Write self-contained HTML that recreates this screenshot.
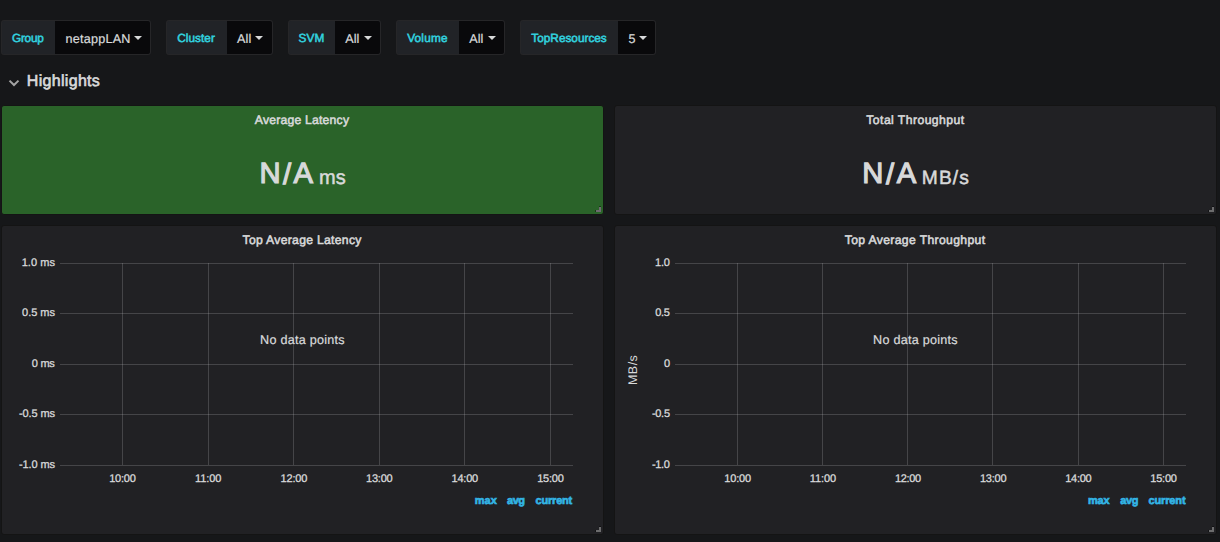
<!DOCTYPE html>
<html lang="en">
<head>
<meta charset="utf-8">
<title>Grafana - Highlights</title>
<style>
html,body{margin:0;padding:0;}
body{width:1220px;height:542px;overflow:hidden;background:#161719;font-family:"Liberation Sans",sans-serif;position:relative;text-rendering:geometricPrecision;}
.t{position:absolute;white-space:pre;}
.b{position:absolute;box-sizing:border-box;}
.lab{background:#212327;border:1px solid #262628;border-right:none;border-radius:3px 0 0 3px;}
.val{background:#09090b;border:1px solid #262628;border-left:none;border-radius:0 3px 3px 0;}
.panel{background:#212124;border:1px solid #141414;border-radius:3px;}
.hl{position:absolute;height:1px;background:rgba(200,200,200,0.22);}
.vl{position:absolute;width:1px;background:rgba(200,200,200,0.22);}
.caret{position:absolute;width:0;height:0;border-left:4px solid transparent;border-right:4px solid transparent;border-top:4px solid #d8d9da;}
.hd{position:absolute;background:#6a686e;}
</style>
</head>
<body>
<div class="b lab" style="left:1px;top:20px;width:54px;height:35px"></div>
<div class="b val" style="left:55px;top:20px;width:96px;height:35px"></div>
<div class="caret" style="left:134px;top:36px"></div>
<div class="b lab" style="left:166px;top:20px;width:61px;height:35px"></div>
<div class="b val" style="left:227px;top:20px;width:46px;height:35px"></div>
<div class="caret" style="left:255px;top:36px"></div>
<div class="b lab" style="left:288px;top:20px;width:47px;height:35px"></div>
<div class="b val" style="left:335px;top:20px;width:46px;height:35px"></div>
<div class="caret" style="left:364px;top:36px"></div>
<div class="b lab" style="left:396px;top:20px;width:63px;height:35px"></div>
<div class="b val" style="left:459px;top:20px;width:46px;height:35px"></div>
<div class="caret" style="left:488px;top:36px"></div>
<div class="b lab" style="left:520px;top:20px;width:98px;height:35px"></div>
<div class="b val" style="left:618px;top:20px;width:38px;height:35px"></div>
<div class="caret" style="left:639px;top:36px"></div>
<svg class="b" style="left:8px;top:78px" width="12" height="10" viewBox="0 0 12 10"><path d="M1.5 2.6 L6 7.0 L10.5 2.6" fill="none" stroke="#a4a4a4" stroke-width="2"/></svg>
<div class="b panel" style="left:1px;top:105px;width:603px;height:110px;background:#2a6329;"></div>
<div class="hd" style="left:599px;top:206px;width:2px;height:1px;background:rgba(0,0,0,0.4)"></div>
<div class="hd" style="left:595px;top:210px;width:1px;height:2px;background:rgba(0,0,0,0.4)"></div>
<div class="hd" style="left:599px;top:207px;width:2px;height:5px;background:#6e6a70"></div>
<div class="hd" style="left:596px;top:210px;width:5px;height:2px;background:#6e6a70"></div>
<div class="b panel" style="left:614px;top:105px;width:603px;height:110px;"></div>
<div class="hd" style="left:1212px;top:206px;width:2px;height:1px;background:rgba(0,0,0,0.4)"></div>
<div class="hd" style="left:1208px;top:210px;width:1px;height:2px;background:rgba(0,0,0,0.4)"></div>
<div class="hd" style="left:1212px;top:207px;width:2px;height:5px;background:#6c6c6d"></div>
<div class="hd" style="left:1209px;top:210px;width:5px;height:2px;background:#6c6c6d"></div>
<div class="b panel" style="left:1px;top:225px;width:603px;height:310px;"></div>
<div class="hd" style="left:599px;top:526px;width:2px;height:1px;background:rgba(0,0,0,0.4)"></div>
<div class="hd" style="left:595px;top:530px;width:1px;height:2px;background:rgba(0,0,0,0.4)"></div>
<div class="hd" style="left:599px;top:527px;width:2px;height:5px;background:#6c6c6d"></div>
<div class="hd" style="left:596px;top:530px;width:5px;height:2px;background:#6c6c6d"></div>
<div class="b panel" style="left:614px;top:225px;width:603px;height:310px;"></div>
<div class="hd" style="left:1212px;top:526px;width:2px;height:1px;background:rgba(0,0,0,0.4)"></div>
<div class="hd" style="left:1208px;top:530px;width:1px;height:2px;background:rgba(0,0,0,0.4)"></div>
<div class="hd" style="left:1212px;top:527px;width:2px;height:5px;background:#6c6c6d"></div>
<div class="hd" style="left:1209px;top:530px;width:5px;height:2px;background:#6c6c6d"></div>
<div class="hl" style="left:60px;top:263px;width:513px"></div>
<div class="hl" style="left:675px;top:263px;width:511px"></div>
<div class="hl" style="left:60px;top:313px;width:513px"></div>
<div class="hl" style="left:675px;top:313px;width:511px"></div>
<div class="hl" style="left:60px;top:364px;width:513px"></div>
<div class="hl" style="left:675px;top:364px;width:511px"></div>
<div class="hl" style="left:60px;top:414px;width:513px"></div>
<div class="hl" style="left:675px;top:414px;width:511px"></div>
<div class="hl" style="left:60px;top:465px;width:513px"></div>
<div class="hl" style="left:675px;top:465px;width:511px"></div>
<div class="vl" style="left:122px;top:263px;height:202px"></div>
<div class="vl" style="left:208px;top:263px;height:202px"></div>
<div class="vl" style="left:293px;top:263px;height:202px"></div>
<div class="vl" style="left:379px;top:263px;height:202px"></div>
<div class="vl" style="left:464px;top:263px;height:202px"></div>
<div class="vl" style="left:550px;top:263px;height:202px"></div>
<div class="vl" style="left:737px;top:263px;height:202px"></div>
<div class="vl" style="left:822px;top:263px;height:202px"></div>
<div class="vl" style="left:907px;top:263px;height:202px"></div>
<div class="vl" style="left:992px;top:263px;height:202px"></div>
<div class="vl" style="left:1078px;top:263px;height:202px"></div>
<div class="vl" style="left:1163px;top:263px;height:202px"></div>
<div class="t" style="left:618px;top:363px;width:30px;height:14px;line-height:14px;font-size:12.5px;color:#d8d9da;text-align:center;transform:rotate(-90deg);transform-origin:50% 50%;letter-spacing:0.45px">MB/s</div>
<span class="t" style="left:12.05px;top:30.41px;font-size:11.8px;line-height:17px;font-weight:400;color:#32d1df;letter-spacing:-0.264px;-webkit-text-stroke:0.55px #32d1df;">Group</span>
<span class="t" style="left:65.53px;top:29.63px;font-size:12.6px;line-height:18px;font-weight:400;color:#d8d9da;letter-spacing:0.240px;-webkit-text-stroke:0.22px #d8d9da;">netappLAN</span>
<span class="t" style="left:177.24px;top:30.41px;font-size:11.8px;line-height:17px;font-weight:400;color:#32d1df;letter-spacing:0.048px;-webkit-text-stroke:0.55px #32d1df;">Cluster</span>
<span class="t" style="left:236.91px;top:29.63px;font-size:12.6px;line-height:18px;font-weight:400;color:#d8d9da;letter-spacing:0.154px;-webkit-text-stroke:0.22px #d8d9da;">All</span>
<span class="t" style="left:298.45px;top:30.41px;font-size:11.8px;line-height:17px;font-weight:400;color:#32d1df;letter-spacing:0.138px;-webkit-text-stroke:0.55px #32d1df;">SVM</span>
<span class="t" style="left:345.17px;top:29.63px;font-size:12.6px;line-height:18px;font-weight:400;color:#d8d9da;letter-spacing:0.127px;-webkit-text-stroke:0.22px #d8d9da;">All</span>
<span class="t" style="left:407.14px;top:30.41px;font-size:11.8px;line-height:17px;font-weight:400;color:#32d1df;letter-spacing:0.233px;-webkit-text-stroke:0.55px #32d1df;">Volume</span>
<span class="t" style="left:469.17px;top:29.63px;font-size:12.6px;line-height:18px;font-weight:400;color:#d8d9da;letter-spacing:0.127px;-webkit-text-stroke:0.22px #d8d9da;">All</span>
<span class="t" style="left:531.37px;top:30.41px;font-size:11.8px;line-height:17px;font-weight:400;color:#32d1df;letter-spacing:-0.002px;-webkit-text-stroke:0.55px #32d1df;">TopResources</span>
<span class="t" style="left:628.41px;top:29.63px;font-size:12.6px;line-height:18px;font-weight:400;color:#d8d9da;-webkit-text-stroke:0.22px #d8d9da;">5</span>
<span class="t" style="left:26.85px;top:71.46px;font-size:16px;line-height:22px;font-weight:400;color:#d8d9da;letter-spacing:0.307px;-webkit-text-stroke:0.64px #d8d9da;">Highlights</span>
<span class="t" style="left:254.79px;top:112.27px;font-size:12.2px;line-height:17px;font-weight:400;color:#d8d9da;letter-spacing:0.211px;-webkit-text-stroke:0.55px #d8d9da;">Average Latency</span>
<span class="t" style="left:866.35px;top:112.27px;font-size:12.2px;line-height:17px;font-weight:400;color:#d8d9da;letter-spacing:0.435px;-webkit-text-stroke:0.55px #d8d9da;">Total Throughput</span>
<span class="t" style="left:242.56px;top:232.27px;font-size:12.2px;line-height:17px;font-weight:400;color:#d8d9da;letter-spacing:0.291px;-webkit-text-stroke:0.55px #d8d9da;">Top Average Latency</span>
<span class="t" style="left:844.76px;top:232.27px;font-size:12.2px;line-height:17px;font-weight:400;color:#d8d9da;letter-spacing:0.349px;-webkit-text-stroke:0.55px #d8d9da;">Top Average Throughput</span>
<span class="t" style="left:259.40px;top:154.38px;font-size:29.2px;line-height:41px;font-weight:400;color:#d8d9da;letter-spacing:2.436px;-webkit-text-stroke:1.17px #d8d9da;">N<span style="position:relative;top:1px">/</span>A</span>
<span class="t" style="left:319.05px;top:164.07px;font-size:20px;line-height:28px;font-weight:400;color:#d8d9da;letter-spacing:0.137px;-webkit-text-stroke:0.50px #d8d9da;">ms</span>
<span class="t" style="left:862.17px;top:154.38px;font-size:29.2px;line-height:41px;font-weight:400;color:#d8d9da;letter-spacing:2.663px;-webkit-text-stroke:1.17px #d8d9da;">N<span style="position:relative;top:1px">/</span>A</span>
<span class="t" style="left:921.87px;top:164.85px;font-size:19.2px;line-height:27px;font-weight:400;color:#d8d9da;letter-spacing:1.102px;-webkit-text-stroke:0.50px #d8d9da;">MB/s</span>
<span class="t" style="left:260.12px;top:330.63px;font-size:12.6px;line-height:18px;font-weight:400;color:#d8d9da;letter-spacing:0.243px;-webkit-text-stroke:0.22px #d8d9da;">No data points</span>
<span class="t" style="left:873.12px;top:330.63px;font-size:12.6px;line-height:18px;font-weight:400;color:#d8d9da;letter-spacing:0.243px;-webkit-text-stroke:0.22px #d8d9da;">No data points</span>
<span class="t" style="left:21.71px;top:255.69px;font-size:11px;line-height:15px;font-weight:400;color:#d8d9da;letter-spacing:0.054px;-webkit-text-stroke:0.30px #d8d9da;">1.0 ms</span>
<span class="t" style="left:22.09px;top:305.69px;font-size:11px;line-height:15px;font-weight:400;color:#d8d9da;letter-spacing:-0.022px;-webkit-text-stroke:0.30px #d8d9da;">0.5 ms</span>
<span class="t" style="left:31.81px;top:356.69px;font-size:11px;line-height:15px;font-weight:400;color:#d8d9da;letter-spacing:-0.273px;-webkit-text-stroke:0.30px #d8d9da;">0 ms</span>
<span class="t" style="left:18.98px;top:406.69px;font-size:11px;line-height:15px;font-weight:400;color:#d8d9da;letter-spacing:-0.114px;-webkit-text-stroke:0.30px #d8d9da;">-0.5 ms</span>
<span class="t" style="left:18.98px;top:457.69px;font-size:11px;line-height:15px;font-weight:400;color:#d8d9da;letter-spacing:-0.114px;-webkit-text-stroke:0.30px #d8d9da;">-1.0 ms</span>
<span class="t" style="left:654.91px;top:255.69px;font-size:11px;line-height:15px;font-weight:400;color:#d8d9da;letter-spacing:-0.143px;-webkit-text-stroke:0.30px #d8d9da;">1.0</span>
<span class="t" style="left:655.30px;top:305.69px;font-size:11px;line-height:15px;font-weight:400;color:#d8d9da;letter-spacing:-0.298px;-webkit-text-stroke:0.30px #d8d9da;">0.5</span>
<span class="t" style="left:664.08px;top:356.69px;font-size:11px;line-height:15px;font-weight:400;color:#d8d9da;-webkit-text-stroke:0.30px #d8d9da;">0</span>
<span class="t" style="left:651.88px;top:406.69px;font-size:11px;line-height:15px;font-weight:400;color:#d8d9da;letter-spacing:-0.271px;-webkit-text-stroke:0.30px #d8d9da;">-0.5</span>
<span class="t" style="left:651.88px;top:457.69px;font-size:11px;line-height:15px;font-weight:400;color:#d8d9da;letter-spacing:-0.314px;-webkit-text-stroke:0.30px #d8d9da;">-1.0</span>
<span class="t" style="left:109.17px;top:471.69px;font-size:11px;line-height:15px;font-weight:400;color:#d8d9da;letter-spacing:-0.210px;-webkit-text-stroke:0.30px #d8d9da;">10:00</span>
<span class="t" style="left:724.32px;top:471.69px;font-size:11px;line-height:15px;font-weight:400;color:#d8d9da;letter-spacing:-0.176px;-webkit-text-stroke:0.30px #d8d9da;">10:00</span>
<span class="t" style="left:195.02px;top:471.69px;font-size:11px;line-height:15px;font-weight:400;color:#d8d9da;letter-spacing:-0.088px;-webkit-text-stroke:0.30px #d8d9da;">11:00</span>
<span class="t" style="left:809.70px;top:471.69px;font-size:11px;line-height:15px;font-weight:400;color:#d8d9da;letter-spacing:-0.091px;-webkit-text-stroke:0.30px #d8d9da;">11:00</span>
<span class="t" style="left:280.59px;top:471.69px;font-size:11px;line-height:15px;font-weight:400;color:#d8d9da;letter-spacing:-0.212px;-webkit-text-stroke:0.30px #d8d9da;">12:00</span>
<span class="t" style="left:894.90px;top:471.69px;font-size:11px;line-height:15px;font-weight:400;color:#d8d9da;letter-spacing:-0.297px;-webkit-text-stroke:0.30px #d8d9da;">12:00</span>
<span class="t" style="left:366.03px;top:471.69px;font-size:11px;line-height:15px;font-weight:400;color:#d8d9da;letter-spacing:-0.224px;-webkit-text-stroke:0.30px #d8d9da;">13:00</span>
<span class="t" style="left:979.93px;top:471.69px;font-size:11px;line-height:15px;font-weight:400;color:#d8d9da;letter-spacing:-0.224px;-webkit-text-stroke:0.30px #d8d9da;">13:00</span>
<span class="t" style="left:451.50px;top:471.69px;font-size:11px;line-height:15px;font-weight:400;color:#d8d9da;letter-spacing:-0.218px;-webkit-text-stroke:0.30px #d8d9da;">14:00</span>
<span class="t" style="left:1065.14px;top:471.69px;font-size:11px;line-height:15px;font-weight:400;color:#d8d9da;letter-spacing:-0.229px;-webkit-text-stroke:0.30px #d8d9da;">14:00</span>
<span class="t" style="left:537.17px;top:471.69px;font-size:11px;line-height:15px;font-weight:400;color:#d8d9da;letter-spacing:-0.210px;-webkit-text-stroke:0.30px #d8d9da;">15:00</span>
<span class="t" style="left:1150.27px;top:471.69px;font-size:11px;line-height:15px;font-weight:400;color:#d8d9da;letter-spacing:-0.210px;-webkit-text-stroke:0.30px #d8d9da;">15:00</span>
<span class="t" style="left:474.73px;top:493.69px;font-size:11px;line-height:15px;font-weight:700;color:#33b5e5;letter-spacing:0.028px;-webkit-text-stroke:0.65px #33b5e5;">max</span>
<span class="t" style="left:507.08px;top:493.69px;font-size:11px;line-height:15px;font-weight:700;color:#33b5e5;letter-spacing:-0.499px;-webkit-text-stroke:0.65px #33b5e5;">avg</span>
<span class="t" style="left:535.51px;top:493.69px;font-size:11px;line-height:15px;font-weight:700;color:#33b5e5;letter-spacing:-0.192px;-webkit-text-stroke:0.65px #33b5e5;">current</span>
<span class="t" style="left:1087.90px;top:493.69px;font-size:11px;line-height:15px;font-weight:700;color:#33b5e5;letter-spacing:-0.103px;-webkit-text-stroke:0.65px #33b5e5;">max</span>
<span class="t" style="left:1120.34px;top:493.69px;font-size:11px;line-height:15px;font-weight:700;color:#33b5e5;letter-spacing:-0.463px;-webkit-text-stroke:0.65px #33b5e5;">avg</span>
<span class="t" style="left:1148.46px;top:493.69px;font-size:11px;line-height:15px;font-weight:700;color:#33b5e5;letter-spacing:-0.128px;-webkit-text-stroke:0.65px #33b5e5;">current</span>
</body>
</html>
